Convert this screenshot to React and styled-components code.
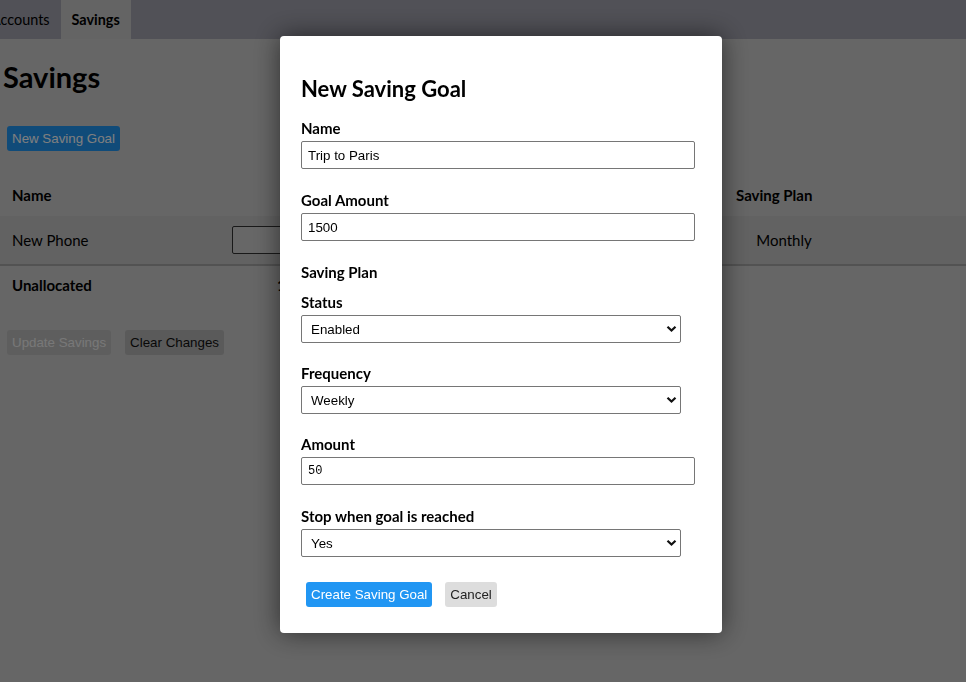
import React from "react";
import styled, { createGlobalStyle } from "styled-components";

const Global = createGlobalStyle`
  html, body { margin: 0; padding: 0; }
  body {
    background: #cccccc;
    font-family: Lato, "Open Sans", sans-serif;
    color: #000;
    width: 966px;
    height: 682px;
    overflow: hidden;
  }
`;

const Page = styled.div`
  display: flex;
  flex-direction: column;
  min-height: 682px;
`;

const Nav = styled.nav`
  display: flex;
  height: 39px;
  background: rgb(162, 162, 174);
  margin-left: -20px;
`;

const Tab = styled.div`
  display: flex;
  align-items: center;
  padding: 0 11px;
  font-size: 14.4px;
  font-weight: ${(p) => (p.$active ? 700 : 400)};
  background: ${(p) => (p.$active ? "#c8c8c8" : "transparent")};
`;

const Main = styled.main`
  display: flex;
  flex-direction: column;
  align-items: flex-start;
  padding-left: 3px;
`;

const Title = styled.h1`
  margin: 20px 0 31px 0;
  font-size: 29px;
  line-height: 36px;
  font-weight: 700;
`;

const Btn = styled.button`
  font-family: "Liberation Sans", Arial, sans-serif;
  font-size: 13.33px;
  line-height: 15px;
  padding: 5px 5px;
  border: none;
  border-radius: 3px;
  cursor: pointer;
  color: ${(p) => (p.$variant === "primary" ? "#fff" : p.$variant === "disabled" ? "#f0f0f0" : "#111")};
  background: ${(p) =>
    p.$variant === "primary" ? "#2196f3" : p.$variant === "disabled" ? "#bdbdbd" : "#b4b4b4"};
`;

const PageBtnRow = styled.div`
  display: flex;
  gap: 14px;
  margin-left: 4px;
`;

const TopBtn = styled.div`
  margin-left: 4px;
`;

const Table = styled.div`
  display: grid;
  grid-template-columns: 220px 504px 120px 1fr;
  margin-top: 23px;
  align-self: stretch;
  margin-left: -3px;
`;

const Cell = styled.div`
  display: flex;
  align-items: center;
  justify-content: ${(p) => (p.$center ? "center" : "flex-start")};
  padding: ${(p) => p.$pad || "12px"};
  font-size: 15px;
  line-height: 18px;
  font-weight: ${(p) => (p.$bold ? 700 : 400)};
  color: #000;
  background: ${(p) => p.$bg || "transparent"};
  border-bottom: ${(p) => (p.$line ? "2px solid #a4a4a4" : "none")};
`;

const TableInput = styled.input`
  width: 100px;
  height: 28px;
  box-sizing: border-box;
  border: 1px solid #333;
  border-radius: 2px;
  background: #cfcfcf;
`;

const BottomBtns = styled(PageBtnRow)`
  margin-top: 26px;
`;

const Overlay = styled.div`
  position: fixed;
  inset: 0;
  background: rgba(0, 0, 0, 0.5);
`;

const Modal = styled.div`
  position: fixed;
  left: 280px;
  top: 36px;
  width: 442px;
  box-sizing: border-box;
  background: #fff;
  border-radius: 4px;
  box-shadow: 0 0 26px rgba(0, 0, 0, 0.55);
  padding: 40px 27px 26px 21px;
  display: flex;
  flex-direction: column;
`;

const ModalTitle = styled.h2`
  margin: 0 0 17px 0;
  font-size: 22px;
  line-height: 26px;
  font-weight: 700;
`;

const Field = styled.div`
  display: flex;
  flex-direction: column;
  align-items: flex-start;
  margin-bottom: ${(p) => (p.$select ? "21px" : "22px")};
`;

const Label = styled.label`
  display: block;
  font-size: 15px;
  line-height: 18px;
  font-weight: 700;
  margin-bottom: 4px;
`;

const SectionHead = styled.div`
  font-size: 15px;
  line-height: 18px;
  font-weight: 700;
  margin-bottom: 12px;
`;

const TextInput = styled.input`
  width: 394px;
  height: 28px;
  box-sizing: border-box;
  border: 1px solid #767676;
  border-radius: 2px;
  padding: 0 6px;
  font-family: ${(p) => (p.$mono ? '"Liberation Mono", monospace' : '"Liberation Sans", Arial, sans-serif')};
  font-size: ${(p) => (p.$mono ? "12px" : "13.33px")};
  color: #000;
  background: #fff;
  outline: none;
`;

const SelectWrap = styled.div`
  position: relative;
  width: 380px;
  height: 28px;
`;

const Select = styled.select`
  appearance: none;
  width: 380px;
  height: 28px;
  box-sizing: border-box;
  border: 1px solid #767676;
  border-radius: 2px;
  padding: 0 24px 0 9px;
  font-family: "Liberation Sans", Arial, sans-serif;
  font-size: 13.33px;
  color: #000;
  background: #fff;
  outline: none;
`;

const Chevron = styled.svg`
  position: absolute;
  right: 4px;
  top: 10px;
  pointer-events: none;
`;

const ModalBtns = styled.div`
  display: flex;
  gap: 13px;
  margin-top: 4px;
  margin-left: 5px;
`;

const ModalBtn = styled(Btn)`
  padding: 5px 5px;
  color: ${(p) => (p.$variant === "primary" ? "#fff" : "#222")};
  background: ${(p) => (p.$variant === "primary" ? "#2196f3" : "#dddddd")};
`;

function SelectField({ label, value, options }) {
  return (
    <Field $select>
      <Label>{label}</Label>
      <SelectWrap>
        <Select defaultValue={value}>
          {options.map((o) => (
            <option key={o}>{o}</option>
          ))}
        </Select>
        <Chevron width="11" height="8" viewBox="0 0 11 8">
          <path d="M1.5 1.8 L5.5 5.6 L9.5 1.8" fill="none" stroke="#111" strokeWidth="2.2" />
        </Chevron>
      </SelectWrap>
    </Field>
  );
}

export default function App() {
  return (
    <>
      <Global />
      <Page>
        <Nav>
          <Tab>Accounts</Tab>
          <Tab $active>Savings</Tab>
        </Nav>
        <Main>
          <Title>Savings</Title>
          <TopBtn>
            <Btn $variant="primary">New Saving Goal</Btn>
          </TopBtn>
          <Table>
            <Cell $bold>Name</Cell>
            <Cell $bold $center>Amount</Cell>
            <Cell $bold>Saving Plan</Cell>
            <Cell />
            <Cell $bg="#c4c4c4" $pad="10px 12px" $line>New Phone</Cell>
            <Cell $bg="#c4c4c4" $pad="10px 12px" $line>
              <TableInput defaultValue="" />
            </Cell>
            <Cell $bg="#c4c4c4" $pad="10px 12px" $line $center>Monthly</Cell>
            <Cell $bg="#c4c4c4" $pad="10px 12px" $line />
            <Cell $bold $pad="10px 12px">Unallocated</Cell>
            <Cell $bold $pad="10px 12px 10px 57px">1,000.00</Cell>
            <Cell $pad="10px 12px" />
            <Cell $pad="10px 12px" />
          </Table>
          <BottomBtns>
            <Btn $variant="disabled" disabled>Update Savings</Btn>
            <Btn>Clear Changes</Btn>
          </BottomBtns>
        </Main>
      </Page>
      <Overlay />
      <Modal>
        <ModalTitle>New Saving Goal</ModalTitle>
        <Field>
          <Label>Name</Label>
          <TextInput defaultValue="Trip to Paris" />
        </Field>
        <Field>
          <Label>Goal Amount</Label>
          <TextInput defaultValue="1500" />
        </Field>
        <SectionHead>Saving Plan</SectionHead>
        <SelectField label="Status" value="Enabled" options={["Enabled", "Disabled"]} />
        <SelectField label="Frequency" value="Weekly" options={["Daily", "Weekly", "Monthly"]} />
        <Field>
          <Label>Amount</Label>
          <TextInput $mono defaultValue="50" />
        </Field>
        <SelectField label="Stop when goal is reached" value="Yes" options={["Yes", "No"]} />
        <ModalBtns>
          <ModalBtn $variant="primary">Create Saving Goal</ModalBtn>
          <ModalBtn>Cancel</ModalBtn>
        </ModalBtns>
      </Modal>
    </>
  );
}
